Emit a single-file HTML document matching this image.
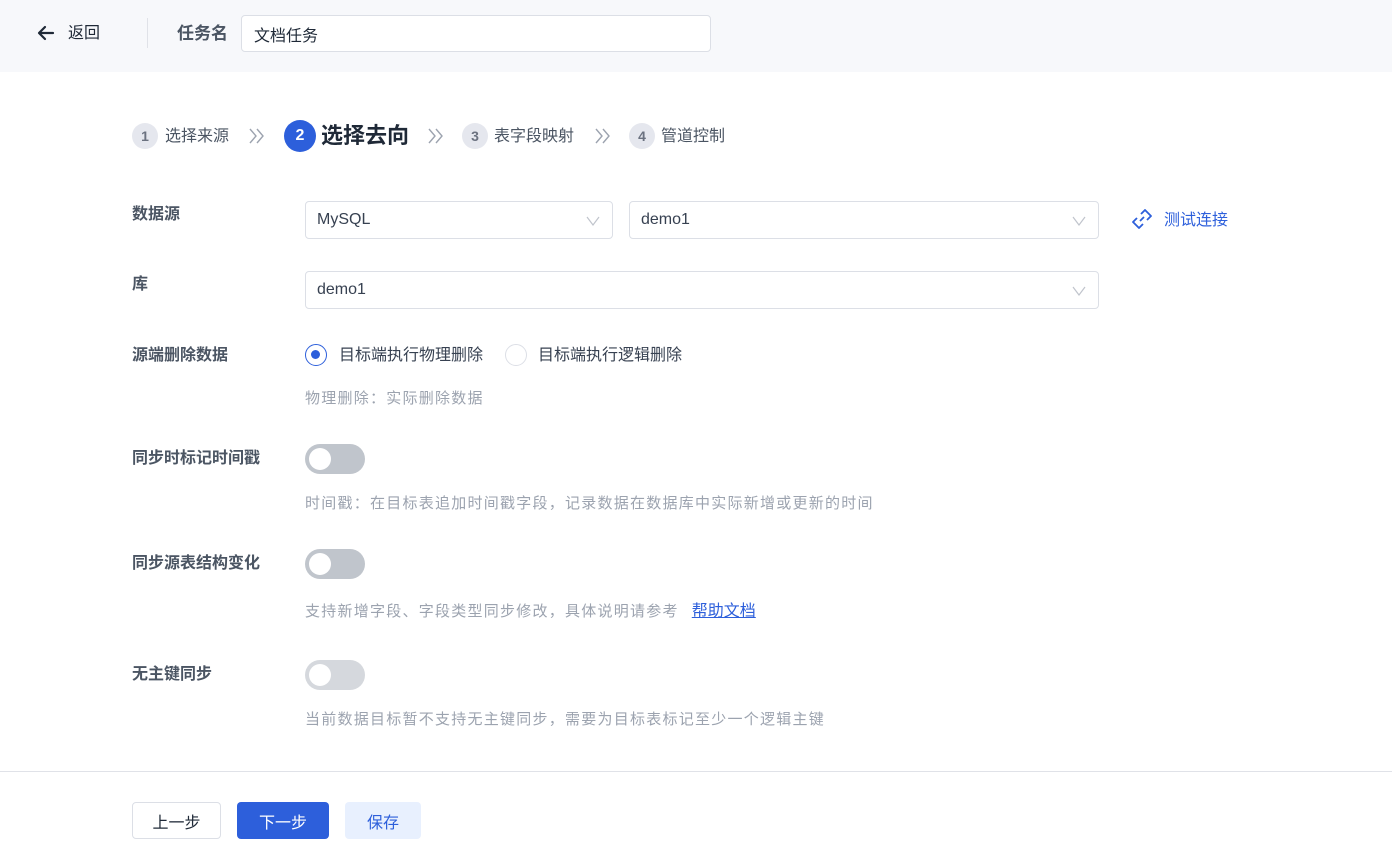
<!DOCTYPE html>
<html><head><meta charset="utf-8"><style>
*{box-sizing:border-box;margin:0;padding:0}
body{width:1392px;height:860px;background:#fff;font-family:"Liberation Sans","Noto Sans CJK SC",sans-serif;position:relative;overflow:hidden;color:#1f2937}
.a{position:absolute}
.hdr{left:0;top:0;width:1392px;height:72px;background:#f7f8fb}
.inp{border:1px solid #dcdfe6;border-radius:4px;background:#fff;font-size:16px;color:#1f2937;padding-left:12px;display:flex;align-items:center}
.circ{border-radius:50%;background:#e5e7ee;color:#6b7280;font-size:14px;font-weight:bold;display:flex;align-items:center;justify-content:center;width:26px;height:26px}
.st{font-size:16px;color:#4b5563;top:127px;line-height:20px}
.chev{top:128px}
.lbl{left:132px;font-size:16px;font-weight:bold;color:#4b5563;line-height:20px}
.sel{border:1px solid #dcdfe6;border-radius:4px;background:#fff;font-size:16px;color:#374151;padding-left:11px;display:flex;align-items:center;height:38px}
.arr{position:absolute;right:12px;top:12px}
.hint{left:305px;font-size:15px;letter-spacing:1.25px;color:#9ca3af;line-height:20px}
.tg{left:305px;width:60px;height:30px;border-radius:15px;background:#c0c5cc}
.tg::after{content:"";position:absolute;left:4px;top:4px;width:22px;height:22px;border-radius:50%;background:#fff}
.btn{top:802px;height:37px;border-radius:4px;font-size:16px;display:flex;align-items:center;justify-content:center}
</style></head><body>
<div class="a hdr"></div>
<svg class="a" style="left:37px;top:25px" width="18" height="16" viewBox="0 0 18 16"><path d="M16 8H3M8 2L2 8l6 6" fill="none" stroke="#1f2937" stroke-width="2.2" stroke-linecap="round" stroke-linejoin="round"/></svg>
<div class="a" style="left:68px;top:24px;font-size:16px;color:#1f2937;line-height:20px">返回</div>
<div class="a" style="left:147px;top:18px;width:1px;height:30px;background:#e0e2e8"></div>
<div class="a" style="left:177px;top:23px;font-size:17px;color:#4b5563;font-weight:bold;line-height:22px">任务名</div>
<div class="a inp" style="left:241px;top:15px;width:470px;height:37px">文档任务</div>

<div class="a circ" style="left:132px;top:123px">1</div>
<div class="a st" style="left:165px">选择来源</div>
<svg class="a chev" style="left:248px" width="18" height="16" viewBox="0 0 18 16"><path d="M2 1l6 7-6 7M9 1l6 7-6 7" fill="none" stroke="#9ca3af" stroke-width="1.4"/></svg>
<div class="a circ" style="left:284px;top:120px;width:32px;height:32px;background:#2d5fdb;color:#fff;font-size:16px">2</div>
<div class="a" style="left:321px;top:121px;font-size:22px;font-weight:bold;color:#1f2937;line-height:30px">选择去向</div>
<svg class="a chev" style="left:427px" width="18" height="16" viewBox="0 0 18 16"><path d="M2 1l6 7-6 7M9 1l6 7-6 7" fill="none" stroke="#9ca3af" stroke-width="1.4"/></svg>
<div class="a circ" style="left:462px;top:123px">3</div>
<div class="a st" style="left:494px">表字段映射</div>
<svg class="a chev" style="left:594px" width="18" height="16" viewBox="0 0 18 16"><path d="M2 1l6 7-6 7M9 1l6 7-6 7" fill="none" stroke="#9ca3af" stroke-width="1.4"/></svg>
<div class="a circ" style="left:629px;top:123px">4</div>
<div class="a st" style="left:661px">管道控制</div>

<div class="a lbl" style="top:205px">数据源</div>
<div class="a sel" style="left:305px;top:201px;width:308px">MySQL<svg class="arr" width="14" height="14" viewBox="0 0 14 14"><path d="M1 3l6 8 6-8" fill="none" stroke="#c0c4cc" stroke-width="1.2"/></svg></div>
<div class="a sel" style="left:629px;top:201px;width:470px">demo1<svg class="arr" width="14" height="14" viewBox="0 0 14 14"><path d="M1 3l6 8 6-8" fill="none" stroke="#c0c4cc" stroke-width="1.2"/></svg></div>
<svg class="a" style="left:1132px;top:209px" width="20" height="20" viewBox="0 0 20 20"><g fill="none" stroke="#2d5fdb" stroke-width="1.8" stroke-linejoin="round"><path d="M9 5l4-4 6 6-4 4"/><path d="M11 15l-4 4-6-6 4-4"/><path d="M8 12l4-4"/></g></svg>
<div class="a" style="left:1164px;top:211px;font-size:16px;color:#2d5fdb;line-height:20px">测试连接</div>

<div class="a lbl" style="top:275px">库</div>
<div class="a sel" style="left:305px;top:271px;width:794px">demo1<svg class="arr" width="14" height="14" viewBox="0 0 14 14"><path d="M1 3l6 8 6-8" fill="none" stroke="#c0c4cc" stroke-width="1.2"/></svg></div>

<div class="a lbl" style="top:346px">源端删除数据</div>
<div class="a" style="left:305px;top:344px;width:22px;height:22px;border-radius:50%;border:1.5px solid #2d5fdb;background:#fff"><div style="position:absolute;left:5px;top:5px;width:9px;height:9px;border-radius:50%;background:#2d5fdb"></div></div>
<div class="a" style="left:339px;top:346px;font-size:16px;color:#374151;line-height:20px">目标端执行物理删除</div>
<div class="a" style="left:505px;top:344px;width:22px;height:22px;border-radius:50%;border:1px solid #dcdfe6;background:#fff"></div>
<div class="a" style="left:538px;top:346px;font-size:16px;color:#374151;line-height:20px">目标端执行逻辑删除</div>
<div class="a hint" style="top:389px">物理删除：实际删除数据</div>

<div class="a lbl" style="top:449px">同步时标记时间戳</div>
<div class="a tg" style="top:444px"></div>
<div class="a hint" style="top:494px">时间戳：在目标表追加时间戳字段，记录数据在数据库中实际新增或更新的时间</div>

<div class="a lbl" style="top:554px">同步源表结构变化</div>
<div class="a tg" style="top:549px"></div>
<div class="a hint" style="top:602px">支持新增字段、字段类型同步修改，具体说明请参考<span style="color:#2d5fdb;text-decoration:underline;margin-left:13px;font-size:16px;letter-spacing:0">帮助文档</span></div>

<div class="a lbl" style="top:665px">无主键同步</div>
<div class="a tg" style="top:660px;background:#d5d8dd"></div>
<div class="a hint" style="top:710px">当前数据目标暂不支持无主键同步，需要为目标表标记至少一个逻辑主键</div>

<div class="a" style="left:0;top:771px;width:1392px;height:1px;background:#e0e2e8"></div>
<div class="a btn" style="left:132px;width:89px;border:1px solid #dcdfe6;color:#1f2937">上一步</div>
<div class="a btn" style="left:237px;width:92px;background:#2d5fdb;color:#fff">下一步</div>
<div class="a btn" style="left:345px;width:76px;background:#e8f0fe;color:#2d5fdb">保存</div>
</body></html>
